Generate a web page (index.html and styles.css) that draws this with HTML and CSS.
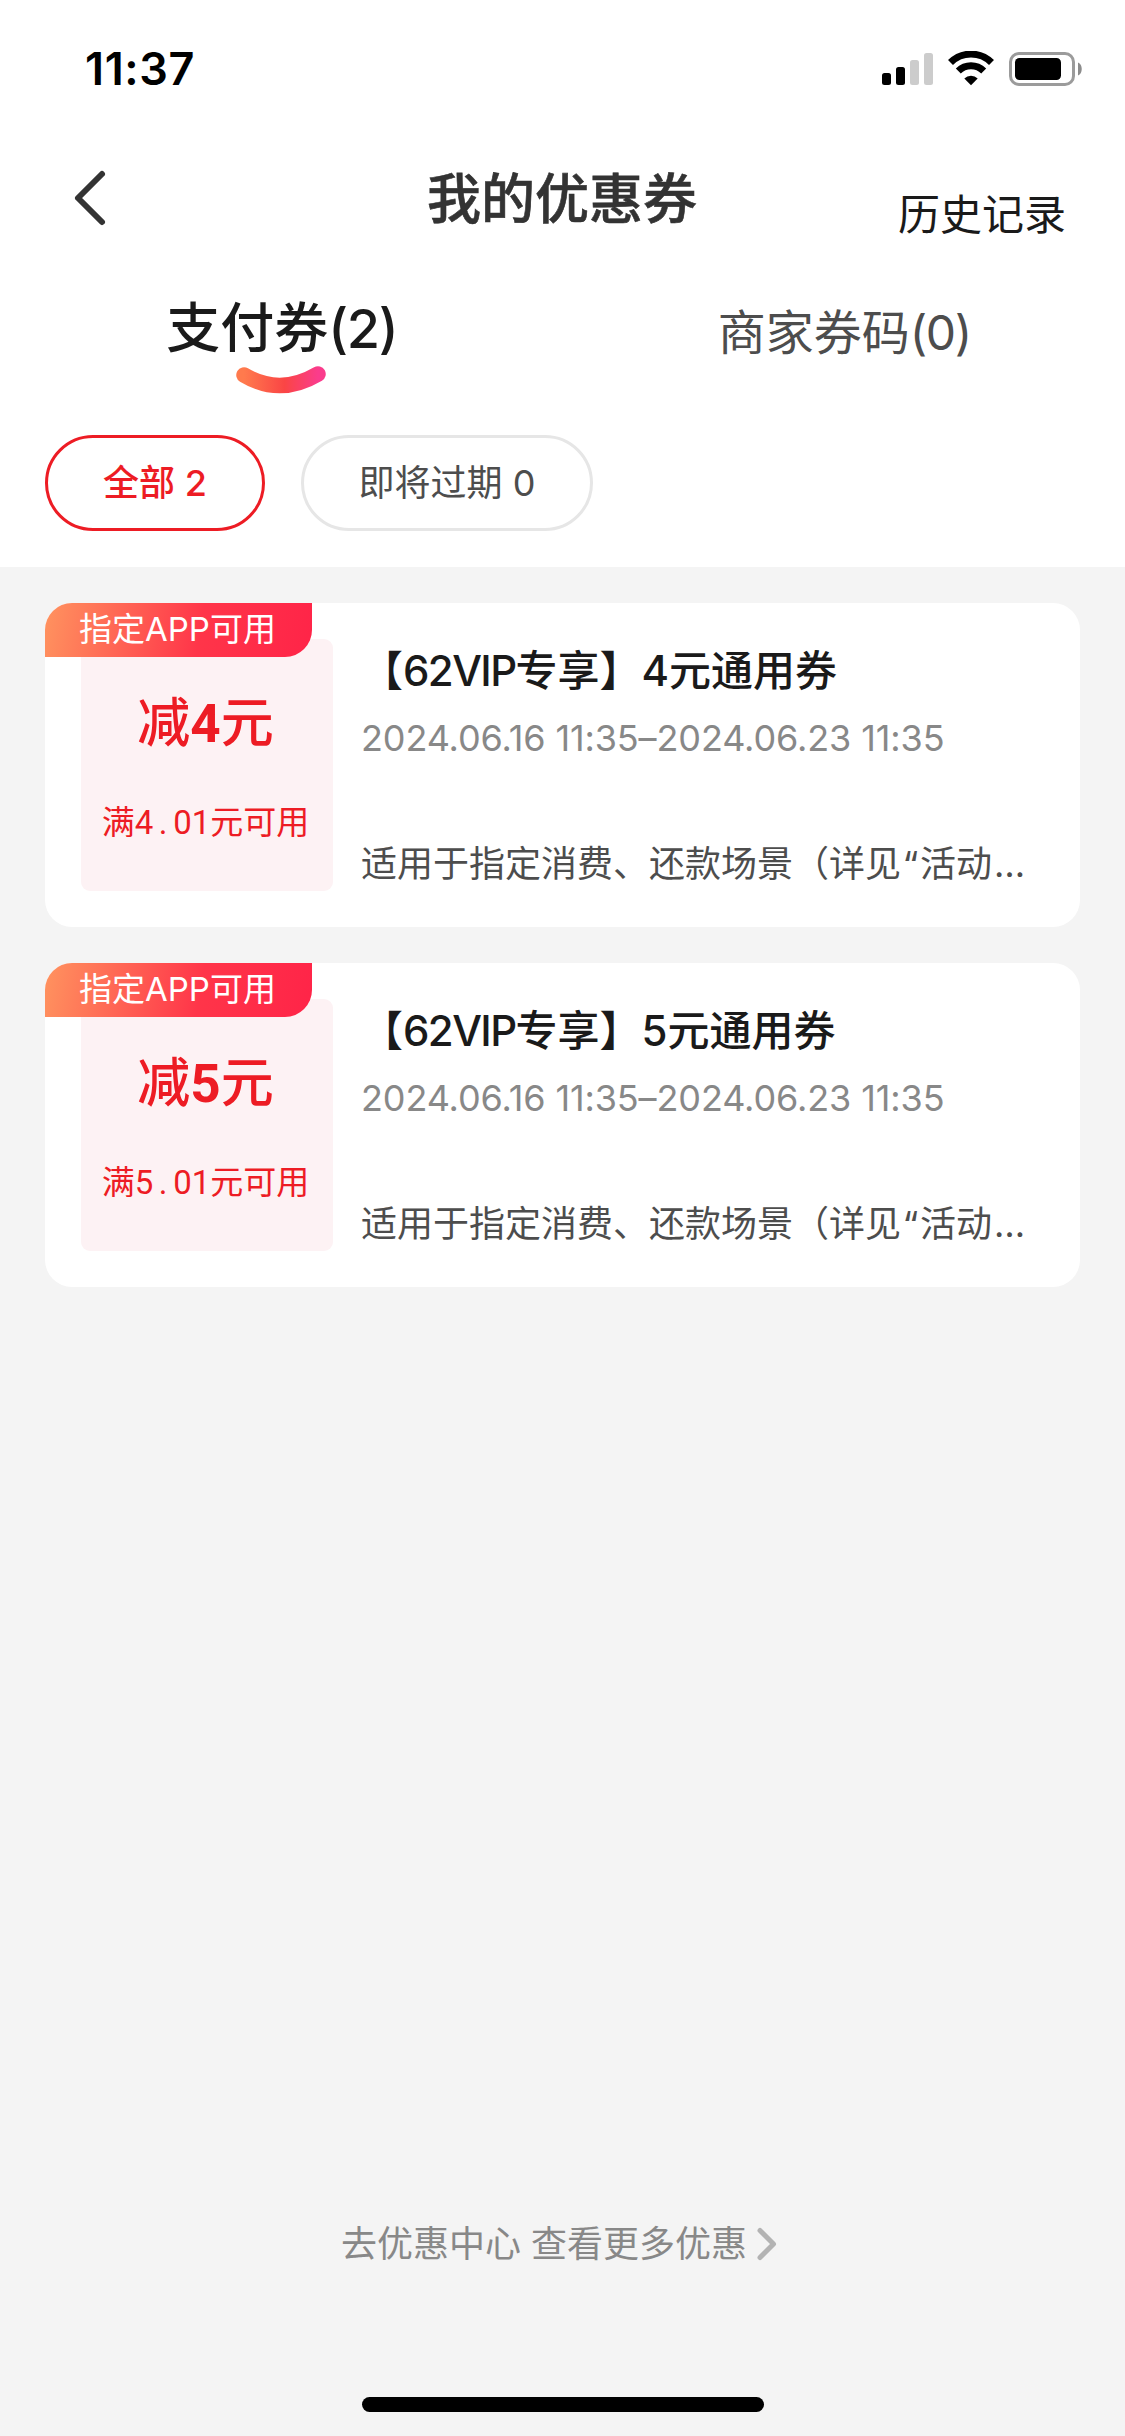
FILE: index.html
```html
<!DOCTYPE html>
<html lang="zh-CN">
<head>
<meta charset="utf-8">
<title>我的优惠券</title>
<link rel="stylesheet" href="styles.css">
</head>
<body>
<div class="screen">
  <header class="top">
    <div class="status">
      <span class="time">11:37</span>
      <svg class="status-icons" width="202" height="36" viewBox="0 0 202 36">
        <rect x="1" y="22" width="9" height="12" rx="2.5"/>
        <rect x="15" y="16" width="9" height="18" rx="2.5"/>
        <rect x="29" y="9" width="9" height="25" rx="2.5" fill="#ccc"/>
        <rect x="43" y="2" width="9" height="32" rx="2.5" fill="#ccc"/>
        <g fill="none" stroke="#000" stroke-width="7">
          <path d="M69.500 11.600A29 29 0 0 1 110.500 11.600"/>
          <path d="M77.300 19.900A18 18 0 0 1 102.700 19.900"/>
        </g>
        <path d="M90 34.300L83.300 27.400A9.800 9.800 0 0 1 96.700 27.400Z"/>
        <rect x="129.500" y="2.500" width="63" height="31" rx="8.500" fill="none" stroke="#9b9b9b" stroke-width="3"/>
        <rect x="134" y="7" width="46" height="22" rx="4.500"/>
        <path d="M197 11.500c5 2 5 11 0 13z" fill="#8c8c8c"/>
      </svg>
    </div>
    <nav class="nav">
      <svg class="back" width="36" height="60" viewBox="0 0 36 60"><path d="M31 6L7 30L31 54" fill="none" stroke="#333" stroke-width="6" stroke-linecap="round" stroke-linejoin="round"/></svg>
      <h1 class="title">我的优惠券</h1>
      <span class="history">历史记录</span>
    </nav>
    <div class="tabs">
      <div class="tab active">
        <span class="tab-label">支付券<span class="count">(2)</span></span>
        <svg class="smile" width="92" height="30" viewBox="0 0 92 30">
          <defs><linearGradient id="smile" x1="0" x2="1" y1="0" y2="0"><stop offset="0" stop-color="#ff7a4d"/><stop offset=".55" stop-color="#fa4545"/><stop offset="1" stop-color="#fa3c8c"/></linearGradient></defs>
          <path d="M9 10Q45 31.500 83 9" fill="none" stroke="url(#smile)" stroke-width="15.500" stroke-linecap="round"/>
        </svg>
      </div>
      <div class="tab"><span class="tab-label">商家券码<span class="count">(0)</span></span></div>
    </div>
    <div class="filters">
      <span class="pill selected">全部 2</span>
      <span class="pill">即将过期 0</span>
    </div>
  </header>
  <main class="list">
    <article class="card">
      <span class="tag">指定APP可用</span>
      <div class="amount">
        <b class="off">减<span class="num">4</span>元</b>
        <span class="limit">满4<i class="dot">.</i>01元可用</span>
      </div>
      <div class="info">
        <h2 class="name">【<span class="vip">62VIP</span>专享】4元通用券</h2>
        <p class="date">2024.06.16 11:35–2024.06.23 11:35</p>
        <p class="desc">适用于指定消费、还款场景（详见<span class="quote">“</span>活动<span class="more-dots">…</span></p>
      </div>
    </article>
    <article class="card">
      <span class="tag">指定APP可用</span>
      <div class="amount">
        <b class="off">减<span class="num">5</span>元</b>
        <span class="limit">满5<i class="dot">.</i>01元可用</span>
      </div>
      <div class="info">
        <h2 class="name">【<span class="vip">62VIP</span>专享】5元通用券</h2>
        <p class="date">2024.06.16 11:35–2024.06.23 11:35</p>
        <p class="desc">适用于指定消费、还款场景（详见<span class="quote">“</span>活动<span class="more-dots">…</span></p>
      </div>
    </article>
  </main>
  <footer class="foot">
    <a class="more">去优惠中心 查看更多优惠
      <svg class="chev" width="20" height="34" viewBox="0 0 20 34"><path d="M3 3.500L16.500 17L3 30.500" fill="none" stroke="#b3b3b3" stroke-width="5" stroke-linecap="round" stroke-linejoin="round"/></svg>
    </a>
    <div class="home"></div>
  </footer>
</div>
</body>
</html>
```
FILE: styles.css
```css
* { box-sizing: border-box; margin: 0; padding: 0; }

body {
  font-family: Inter, "Noto Sans CJK SC", sans-serif;
  background: #f4f4f4;
  color: #1a1a1a;
  white-space: nowrap;
  text-spacing-trim: space-all;
}

.screen {
  width: 1125px;
  height: 2436px;
  display: flex;
  flex-direction: column;
  overflow: hidden;
}

.top { height: 567px; background: #fff; }

.status {
  height: 132px;
  padding: 42px 42px 0 85px;
  display: flex;
  justify-content: space-between;
}
.time {
  font-size: 45px;
  font-weight: 600;
  line-height: 54px;
  letter-spacing: .6px;
  color: #000;
}
.status-icons { margin-top: 9px; }

.nav {
  height: 132px;
  padding: 0 59px 0 71px;
  display: grid;
  grid-template-columns: 1fr auto 1fr;
  align-items: center;
}
.back { display: block; }
.title {
  padding-top: 3px;
  font-size: 54px;
  font-weight: 500;
  line-height: 60px;
  color: #333;
  -webkit-text-stroke: .6px #333;
  margin-right: 13px;
}
.history {
  justify-self: end;
  padding-top: 34px;
  font-size: 42px;
  line-height: 50px;
}

.tabs {
  height: 171px;
  display: grid;
  grid-template-columns: 1fr 1fr;
}
.tab {
  display: flex;
  flex-direction: column;
  align-items: center;
  padding-top: 39px;
  font-size: 48px;
  line-height: 60px;
  color: #4d4d4d;
}
.tab.active {
  padding-top: 35px;
  font-size: 54px;
  font-weight: 500;
  color: #1a1a1a;
}
.tab-label { padding-left: 1px; }
.count { letter-spacing: -1.4px; }
.smile { display: block; margin-top: 6px; }

.filters { display: flex; gap: 36px; padding-left: 45px; }
.pill {
  width: 292px;
  height: 96px;
  border: 3px solid #e6e6e6;
  border-radius: 48px;
  font-size: 36px;
  line-height: 91px;
  text-align: center;
  color: #4d4d4d;
}
.pill.selected { width: 220px; border-color: #ed1c24; color: #ed1c24; font-weight: 500; }

.list {
  display: flex;
  flex-direction: column;
  gap: 36px;
  padding: 36px 45px 0;
}
.card {
  position: relative;
  height: 324px;
  padding: 36px;
  display: flex;
  gap: 28px;
  background: #fff;
  border-radius: 27px;
}
.tag {
  position: absolute;
  left: 0;
  top: 0;
  width: 267px;
  height: 54px;
  padding-left: 34px;
  border-radius: 27px 0 27px 0;
  background: linear-gradient(100deg, #ff935f 0%, #ff3549 58%, #ff2448 100%);
  color: #fff;
  font-size: 33px;
  line-height: 53px;
}
.amount {
  width: 252px;
  height: 252px;
  flex: none;
  padding: 54px 3px 0 0;
  display: flex;
  flex-direction: column;
  align-items: center;
  gap: 49px;
  background: #fdf2f4;
  border-radius: 9px;
  color: #ed1c24;
}
.off { font-size: 53px; font-weight: 500; line-height: 60px; }
.num { font-family: Roboto, sans-serif; font-weight: 700; }
.limit {
  font-family: Roboto, "Noto Sans CJK SC", sans-serif;
  font-size: 33px;
  line-height: 40px;
}
.dot { display: inline-block; width: 20px; text-align: center; font-style: normal; }

.info { display: flex; flex-direction: column; }
.name { margin-top: 7px; font-size: 42px; font-weight: 500; line-height: 50px; }
.vip { letter-spacing: -1.6px; }
.date { margin-top: 20px; font-size: 36px; line-height: 44px; letter-spacing: -.12px; color: #888; }
.desc { margin-top: 82px; font-size: 36px; line-height: 44px; color: #4d4d4d; }
.quote { display: inline-block; width: 19px; text-align: center; }
.more-dots { letter-spacing: 2px; padding-left: 2px; }

.foot {
  margin-top: auto;
  height: 220px;
  display: flex;
  flex-direction: column;
  align-items: center;
}
.more {
  display: flex;
  align-items: center;
  gap: 10px;
  margin-top: 6px;
  padding-right: 7px;
  font-size: 36px;
  line-height: 44px;
  color: #888;
}
.home {
  width: 402px;
  height: 15px;
  margin-top: 131px;
  border-radius: 8px;
  background: #000;
}
```
